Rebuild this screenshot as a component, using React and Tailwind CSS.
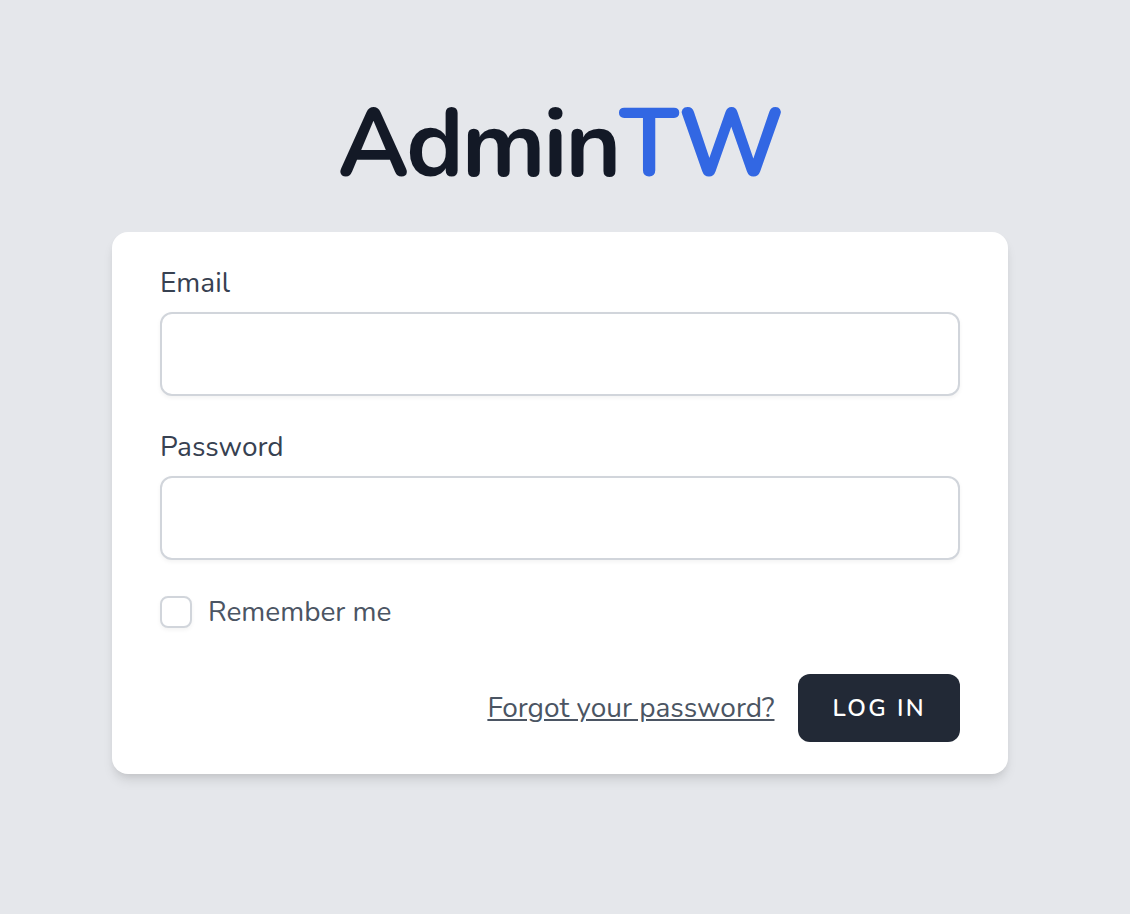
import React from "react";

const labelClass = "block text-[28px] leading-[38px] text-[#374151]";

const inputClass =
  "mt-2.5 block h-[84px] w-full rounded-xl border-2 border-[#d1d5db] bg-white px-6 text-3xl text-[#111827] shadow-[0_2px_4px_rgba(0,0,0,0.05)] outline-none focus:border-[#6366f1]";

export default function App() {
  return (
    <main className="min-h-screen bg-[#e5e7eb] pt-22 pr-[122px] pb-10 pl-28 font-['Nunito','Lato',sans-serif] antialiased">
      <h1 className="text-center text-8xl leading-[114px] font-bold tracking-tight text-[#131926]">
        Admin<span className="text-[#3267e3]">TW</span>
      </h1>
      <form
        className="mt-[30px] rounded-2xl bg-white px-12 py-8 shadow-[0_8px_12px_-2px_rgba(0,0,0,0.1),0_4px_8px_-4px_rgba(0,0,0,0.1)]"
        onSubmit={(e) => e.preventDefault()}
      >
        <div>
          <label htmlFor="email" className={labelClass}>
            Email
          </label>
          <input id="email" type="email" className={inputClass} />
        </div>
        <div className="mt-8">
          <label htmlFor="password" className={labelClass}>
            Password
          </label>
          <input id="password" type="password" className={inputClass} />
        </div>
        <div className="mt-8 flex items-center gap-4">
          <input
            id="remember"
            type="checkbox"
            className="size-8 appearance-none rounded-lg border-2 border-[#d1d5db] bg-white shadow-[0_2px_4px_rgba(0,0,0,0.05)] checked:bg-[#4f46e5]"
          />
          <label htmlFor="remember" className="text-[28px] leading-10 text-[#4b5563]">
            Remember me
          </label>
        </div>
        <div className="mt-[42px] flex items-center justify-end gap-6">
          <a href="#" className="text-[28px] leading-10 text-[#4b5563] underline">
            Forgot your password?
          </a>
          <button
            type="submit"
            className="h-[68px] rounded-xl bg-[#222936] px-[34px] text-2xl font-semibold tracking-widest text-white"
          >
            LOG IN
          </button>
        </div>
      </form>
    </main>
  );
}
